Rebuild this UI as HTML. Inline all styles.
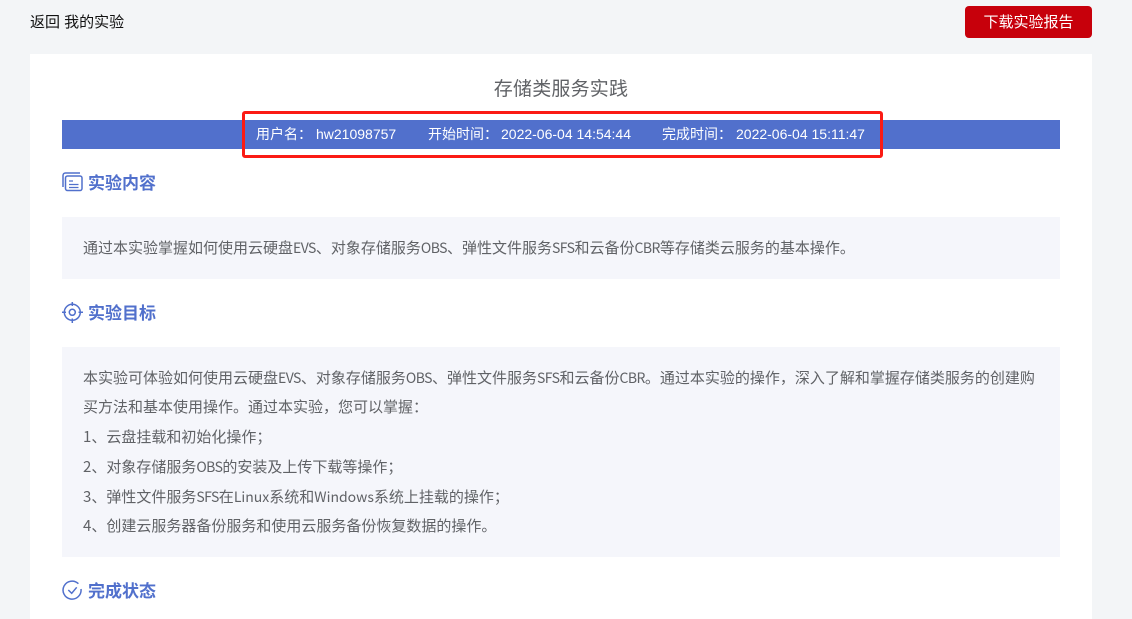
<!DOCTYPE html>
<html lang="zh">
<head>
<meta charset="utf-8">
<title>存储类服务实践</title>
<style>
html,body{margin:0;padding:0;}
body{position:relative;width:1132px;height:619px;overflow:hidden;background:#f3f5f7;font-family:"Liberation Sans","Noto Sans CJK SC",sans-serif;color:#606266;}
.a{position:absolute;white-space:nowrap;}
.card{position:absolute;left:30px;top:54px;width:1062px;height:565px;background:#fff;}
.btn{position:absolute;left:965px;top:6px;width:127px;height:32px;background:#c7000b;border-radius:4px;color:#fff;font-size:15px;line-height:33px;text-align:center;}
.bar{position:absolute;left:62px;top:120px;width:998px;height:29px;background:#5170cc;}
.bar span{position:absolute;top:0;line-height:29px;font-size:14px;color:#fff;white-space:nowrap;}
.red{position:absolute;left:242px;top:111px;width:635px;height:41px;border:3px solid #fb1b14;border-radius:3px;}
.h{position:absolute;left:88px;font-size:17px;font-weight:bold;color:#5170cc;line-height:24px;white-space:nowrap;}
.box{position:absolute;left:62px;width:998px;background:#f5f6fb;}
.t{position:absolute;left:83px;font-family:"Noto Sans CJK SC","Liberation Sans",sans-serif;font-size:15px;line-height:30px;color:#606266;white-space:nowrap;}
.t i{font-style:normal;font-size:14px;letter-spacing:-.55px;}
.t i.w{letter-spacing:0;}
svg{position:absolute;fill:none;stroke:#5170cc;}
</style>
</head>
<body>
<div class="a" style="left:30px;top:13px;font-size:15px;line-height:20px;color:#111;">返回 我的实验</div>
<div class="btn">下载实验报告</div>
<div class="card"></div>
<div class="a" style="left:0;width:1122px;text-align:center;top:77px;font-size:19px;line-height:26px;letter-spacing:.2px;color:#606266;">存储类服务实践</div>
<div class="bar">
<span style="left:194px;">用户名：</span>
<span style="left:254px;">hw21098757</span>
<span style="left:366px;">开始时间：</span>
<span style="left:439px;">2022-06-04 14:54:44</span>
<span style="left:600px;">完成时间：</span>
<span style="left:674px;">2022-06-04 15:11:47</span>
</div>
<div class="red"></div>

<svg style="left:62px;top:172px;" width="21" height="20" viewBox="0 0 21 20" stroke-width="1.5">
<path d="M1 15V3.5C1 2 2 1 3.5 1H18"/>
<rect x="3.5" y="4" width="16.5" height="14.5" rx="2"/>
<path d="M7 9H11M7 12.5H16.5M7 15.5H16.5" stroke-width="1.2"/>
</svg>
<div class="h" style="top:172px;">实验内容</div>
<div class="box" style="top:217px;height:62px;"></div>
<div class="t" style="top:233px;">通过本实验掌握如何使用云硬盘<i>EVS</i>、对象存储服务<i>OBS</i>、弹性文件服务<i>SFS</i>和云备份<i>CBR</i>等存储类云服务的基本操作。</div>

<svg style="left:62px;top:302px;" width="21" height="21" viewBox="0 0 21 21" stroke-width="1.5">
<circle cx="10.3" cy="10.3" r="8"/>
<circle cx="10.3" cy="10.3" r="3"/>
<path d="M10.3 0V4M10.3 16.5V21M0 10.3H4M16.5 10.3H21"/>
</svg>
<div class="h" style="top:302px;">实验目标</div>
<div class="box" style="top:347px;height:210px;"></div>
<div class="t" style="top:363px;">本实验可体验如何使用云硬盘<i>EVS</i>、对象存储服务<i>OBS</i>、弹性文件服务<i>SFS</i>和云备份<i>CBR</i>。通过本实验的操作，深入了解和掌握存储类服务的创建购</div>
<div class="t" style="top:392px;">买方法和基本使用操作。通过本实验，您可以掌握：</div>
<div class="t" style="top:422px;">1、云盘挂载和初始化操作；</div>
<div class="t" style="top:452px;">2、对象存储服务<i>OBS</i>的安装及上传下载等操作；</div>
<div class="t" style="top:482px;">3、弹性文件服务<i>SFS</i>在<i class="w">Linux</i>系统和<i class="w">Windows</i>系统上挂载的操作；</div>
<div class="t" style="top:511px;">4、创建云服务器备份服务和使用云服务备份恢复数据的操作。</div>

<svg style="left:62px;top:580px;" width="21" height="21" viewBox="0 0 21 21" stroke-width="1.5">
<path d="M16.4 3.7A9 9 0 1 0 19 9"/>
<path d="M6.3 10L9.7 13.3L14.7 7.3"/>
</svg>
<div class="h" style="top:580px;">完成状态</div>
</body>
</html>
